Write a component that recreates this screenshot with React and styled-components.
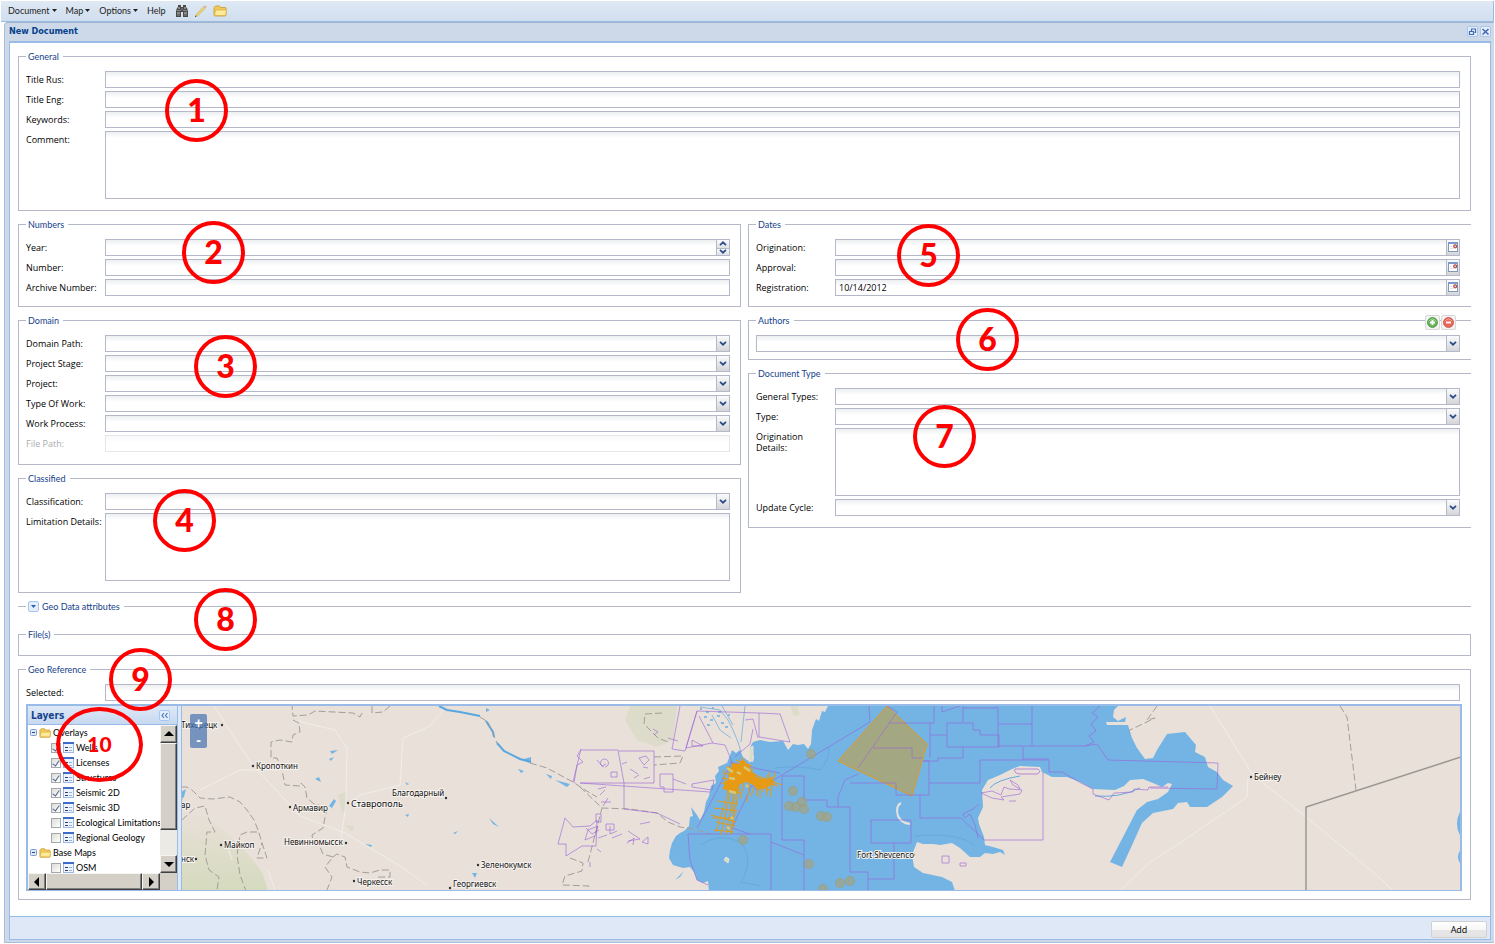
import React from "react";
import styled, { createGlobalStyle, css } from "styled-components";

const GlobalStyle = createGlobalStyle`
  *, *::before, *::after { box-sizing: border-box; }
  body {
    margin: 0;
    background: #fff;
    color: #000;
    font: 9px/13px "Open Sans", "Noto Sans", sans-serif;
  }
  button, input, select, textarea { font: inherit; color: inherit; margin: 0; }
`;

/* ---------- shell ---------- */

const Page = styled.div`
  display: flex;
  flex-direction: column;
  min-height: 100vh;
  padding: 1px;
`;

const Toolbar = styled.nav`
  display: flex;
  align-items: center;
  height: 21px;
  padding: 0 0 1px 7px;
  background: linear-gradient(#dfe9f4, #d0deef);
  border-bottom: 1px solid #99bbe8;
  border-right: 1px solid #99bbe8;
`;

const MenuButton = styled.button`
  display: flex;
  align-items: center;
  gap: 2px;
  padding: 0;
  margin-right: 9px;
  border: 0;
  background: none;
  color: #222;
  font-family: Lato, sans-serif;
  svg { display: block; }
`;

const IconBar = styled.div`
  display: flex;
  gap: 5px;
`;

const IconButton = styled.button`
  width: 14px;
  height: 14px;
  padding: 0;
  border: 0;
  background: none;
  svg { display: block; }
`;

const Window = styled.main`
  flex: 1;
  display: flex;
  flex-direction: column;
  margin-left: 3px;
  padding: 0 3px 2px 4px;
  background: #cdd9e8;
  border: 1px solid #a9bfd8;
  border-top: 1px solid #a2b5cc;
  border-right: 0;
  border-radius: 4px 0 0 0;
`;

const WindowHeader = styled.header`
  display: flex;
  align-items: center;
  justify-content: space-between;
  height: 18px;
  padding-bottom: 1px;
`;

const WindowTitle = styled.h1`
  margin: 0;
  font: bold 9px/13px "DejaVu Sans Condensed", "DejaVu Sans", sans-serif;
  color: #04408c;
`;

const Tools = styled.div`
  display: flex;
  gap: 2px;
`;

const ToolButton = styled.button`
  display: grid;
  place-items: center;
  width: 11px;
  height: 11px;
  padding: 0;
  border: 1px solid #a9c6ef;
  border-radius: 2px;
  background: #e4eefb;
  svg { display: block; }
`;

const Body = styled.form`
  flex: 1;
  display: flex;
  flex-direction: column;
  background: #fff;
  border: 1px solid #99bbe8;
  border-width: 2px 1px 1px 1px;
`;

const Content = styled.div`
  flex: 1;
  display: flex;
  flex-direction: column;
  gap: 7px;
  padding: 7px 19px 16px 8px;
`;

const Columns = styled.div`
  display: grid;
  grid-template-columns: 1fr 1fr;
  gap: 7px;
  align-items: start;
`;

const Column = styled.div`
  display: flex;
  flex-direction: column;
  gap: 7px;
`;

const Footer = styled.footer`
  display: flex;
  justify-content: flex-end;
  padding: 4px 3px 1px;
  background: #dfe8f6;
  border-top: 1px solid #99bbe8;
`;

const AddButton = styled.button`
  width: 56px;
  height: 17px;
  padding: 0;
  border: 1px solid #d1d1d1;
  border-radius: 2px;
  background: linear-gradient(#fff, #f7f7f7 50%, #e6e6e6 51%, #e4e4e4);
`;

/* ---------- form parts ---------- */

const Section = styled.div`
  position: relative;
`;

const FieldsetBox = styled.fieldset`
  min-width: 0;
  margin: 0;
  padding: ${(p) => (p.$bare ? "0" : "8px")} 10px ${(p) => p.$bottom}px 7px;
  min-height: ${(p) => p.$minHeight || 0}px;
  border: 1px solid #b5b8c8;
  ${(p) => p.$openEnd && css`border-right: 0; padding-right: 11px;`}
  ${(p) => p.$collapsed && css`border-width: 1px 0 0; padding-left: 8px;`}
`;

const Legend = styled.legend`
  display: flex;
  align-items: center;
  gap: 3px;
  height: 13px;
  padding: 0 4px 0 2px;
  font-family: Lato, sans-serif;
  line-height: 13px;
  color: #15428b;
`;

const Toggle = styled.button`
  display: grid;
  place-items: center;
  width: 11px;
  height: 11px;
  padding: 0;
  border: 1px solid #a9c6ef;
  border-radius: 2px;
  background: #e4eefb;
  color: #15428b;
`;

const Fields = styled.div`
  display: flex;
  flex-direction: column;
  gap: 3px;
`;

const Row = styled.div`
  display: grid;
  grid-template-columns: ${(p) => (p.$noLabel ? "1fr" : "79px 1fr")};
  align-items: start;
  opacity: ${(p) => (p.$disabled ? 0.35 : 1)};
`;

const Label = styled.label`
  padding: ${(p) => (p.$wrap ? "3px 20px 0 0" : "0")};
  line-height: ${(p) => (p.$wrap ? 11 : 17)}px;
  white-space: ${(p) => (p.$wrap ? "normal" : "nowrap")};
`;

const fieldFace = css`
  border: 1px solid #b5b8c8;
  border-radius: 0;
  background: linear-gradient(#eceff0, #fff 6px);
  outline: none;
`;

const TextInput = styled.input`
  ${fieldFace}
  display: block;
  width: 100%;
  height: 17px;
  padding: 0 3px;
`;

const TextArea = styled.textarea`
  ${fieldFace}
  display: block;
  width: 100%;
  height: 68px;
  padding: 2px 3px;
  resize: none;
`;

const Combo = styled.div`
  ${fieldFace}
  position: relative;
  display: flex;
  height: 17px;
  select, input {
    flex: 1;
    min-width: 0;
    padding: 0 3px;
    border: 0;
    border-radius: 0;
    background: none;
    outline: none;
    appearance: none;
  }
  input::-webkit-inner-spin-button { display: none; }
`;

const Trigger = styled.span`
  display: grid;
  place-items: center;
  width: 13px;
  border-left: 1px solid #b5b8c8;
  background: linear-gradient(#fafbfc, #d3d5d8);
  pointer-events: none;
  svg { display: block; }
`;

const TriggerButton = styled.button`
  display: grid;
  place-items: center;
  width: 13px;
  padding: 0;
  border: 0;
  border-left: 1px solid #b5b8c8;
  background: linear-gradient(#fafbfc, #d3d5d8);
  svg { display: block; }
`;

const SpinButtons = styled.span`
  display: grid;
  grid-template-rows: 1fr 1fr;
  width: 13px;
  border-left: 1px solid #b5b8c8;
  button {
    display: grid;
    place-items: center;
    min-height: 0;
    padding: 0;
    border: 0;
    background: linear-gradient(#fafbfc, #dfe0e4);
  }
  button + button { border-top: 1px solid #b5b8c8; }
  svg { display: block; }
`;

const FieldActions = styled.div`
  position: absolute;
  top: 1px;
  right: 15px;
  display: flex;
  gap: 1px;
`;

const RoundAction = styled.button`
  display: grid;
  place-items: center;
  width: 15px;
  height: 15px;
  padding: 0;
  border: 1px solid #d9d9d9;
  border-radius: 2px;
  background: #f3f3f3;
  svg { display: block; }
`;

const Callout = styled.span`
  position: absolute;
  z-index: 2;
  left: ${(p) => p.$x}px;
  top: ${(p) => p.$y}px;
  display: grid;
  place-items: center;
  width: ${(p) => (p.$wide ? 87 : 63)}px;
  height: ${(p) => (p.$wide ? 75 : 63)}px;
  padding-bottom: 2px;
  border: 4px solid #f00;
  border-radius: 50%;
  color: #f00;
  font: 900 ${(p) => (p.$wide ? 21 : 32)}px/34px Lato, sans-serif;
  pointer-events: none;
`;

/* ---------- map panel ---------- */

const MapPanel = styled.div`
  display: grid;
  grid-template-columns: 153px 1fr;
  height: 187px;
  margin-right: -2px;
  border: 2px solid #99bbe8;
  border-bottom-width: 1px;
  background: #dfe8f6;
`;

const LayersPanel = styled.section`
  display: flex;
  flex-direction: column;
  min-height: 0;
  margin-right: 3px;
  border-right: 1px solid #99bbe8;
`;

const LayersHeader = styled.header`
  display: flex;
  align-items: center;
  justify-content: space-between;
  height: 19px;
  padding: 0 7px 0 3px;
  background: linear-gradient(#dfe9f6, #c6d8f0);
  border-bottom: 1px solid #99bbe8;
`;

const LayersTitle = styled.h2`
  margin: 0;
  font: bold 10px/13px "DejaVu Sans Condensed", "DejaVu Sans", sans-serif;
  color: #15428b;
`;

const TreeViewport = styled.div`
  flex: 1;
  min-height: 0;
  display: grid;
  grid-template-columns: 1fr 17px;
  grid-template-rows: 1fr 17px;
  background: #d4d0c8;
`;

const Tree = styled.ul`
  margin: 0;
  padding: 0 0 0 2px;
  overflow: hidden;
  background: #fff;
  list-style: none;
  font-family: Lato, sans-serif;
`;

const TreeRow = styled.li`
  display: flex;
  align-items: center;
  gap: 2px;
  height: 15px;
  padding-left: ${(p) => (p.$leaf ? 21 : 0)}px;
  white-space: nowrap;
  label { display: flex; align-items: center; gap: 2px; }
  svg { display: block; flex: none; }
`;

const Check = styled.input`
  appearance: none;
  display: grid;
  place-items: center;
  flex: none;
  width: 10px;
  height: 10px;
  border: 1px solid #a4a8ac;
  background: linear-gradient(135deg, #dcdcd7, #fff);
  &:checked::after {
    content: "";
    width: 4px;
    height: 7px;
    margin-bottom: 2px;
    border: solid #4b5f97;
    border-width: 0 1px 1px 0;
    transform: rotate(35deg);
  }
`;

const ScrollTrack = styled.div`
  display: flex;
  flex-direction: ${(p) => (p.$vertical ? "column" : "row")};
  background: #eceae5;
`;

const bevel = css`
  border: 1px solid;
  border-color: #f6f5f2 #404040 #404040 #f6f5f2;
  background: #d4d0c8;
  box-shadow: inset -1px -1px #808080;
`;

const ScrollButton = styled.button`
  ${bevel}
  display: grid;
  place-items: center;
  flex: none;
  width: ${(p) => (p.$vertical ? "auto" : "18px")};
  height: ${(p) => (p.$vertical ? "18px" : "auto")};
  padding: 0;
  svg { display: block; }
`;

const Thumb = styled.div`
  ${bevel}
  flex: ${(p) => p.$grow};
`;

const Gap = styled.div`
  flex: ${(p) => p.$grow};
`;

const MapView = styled.div`
  position: relative;
  min-width: 0;
  border-left: 1px solid #99bbe8;
  background: #e8e0d9;
  overflow: hidden;
  > svg { display: block; width: 100%; height: 100%; }
`;

const ZoomControl = styled.div`
  position: absolute;
  left: 8px;
  top: 8px;
  display: flex;
  flex-direction: column;
  width: 17px;
  height: 34px;
  border-radius: 2px;
  background: rgba(74, 117, 178, 0.72);
  overflow: hidden;
  button {
    flex: 1;
    padding: 0;
    border: 0;
    background: none;
    color: #fff;
    font: bold 14px/16px "Liberation Sans", sans-serif;
  }
`;

/* ---------- icons ---------- */

const Caret = ({ color = "#222" }) => (
  <svg width="5" height="3" viewBox="0 0 5 3" aria-hidden="true"><path d="M0 0h5L2.500 3z" fill={color} /></svg>
);

const Chevron = ({ up }) => (
  <svg width="8" height="5" viewBox="0 0 8 5" aria-hidden="true">
    <path d={up ? "M1 4.200 4 1.300 7 4.200" : "M1 .8 4 3.700 7 .8"} fill="none" stroke="#2b4a86" strokeWidth="1.700" />
  </svg>
);

const CalendarIcon = () => (
  <svg width="10" height="11" viewBox="0 0 10 11" aria-hidden="true">
    <rect x=".5" y="1" width="9" height="8.500" fill="#fff" stroke="#8296ba" />
    <rect x="0" y="0" width="10" height="2" fill="#7c9acb" />
    <path d="M2 4.500h2M2 6.500h4" stroke="#dde2ea" />
    <circle cx="7.200" cy="4.300" r="1.500" fill="#f3d4d4" stroke="#b8474b" strokeWidth="1.200" />
  </svg>
);

const Binoculars = () => (
  <svg width="14" height="14" viewBox="0 0 14 14" aria-hidden="true">
    <path d="M3 1h3v2h2V1h3v2l1 1 1 3v6H8V8H6v5H1V7l1-3 1-1z" fill="#4a4a4a" />
    <path d="M3 4h2M9 4h2M3 6v1M5 6v1M9 6v1M11 6v1M2 9h3M9 9h3" stroke="#c9c9c9" />
    <path d="M2 11h3M9 11h3M6 5h2" stroke="#8b8b8b" />
  </svg>
);

const Pencil = () => (
  <svg width="14" height="14" viewBox="0 0 14 14" aria-hidden="true">
    <path d="M1.500 12.500l.8-2.200 7.700-7.800 1.500 1.500-7.800 7.800z" fill="#f1dc73" stroke="#b99c45" strokeWidth=".6" />
    <path d="M10 2.500l1-1q1.200 0 1.500 1.500l-1 1z" fill="#e3a3a0" />
    <path d="M1 13l.5-1.500 1 1z" fill="#333" />
  </svg>
);

const Folder = ({ size = 14 }) => (
  <svg width={size} height={size} viewBox="0 0 14 14" aria-hidden="true">
    <path d="M1 3.500V11q0 1 1 1h10q1 0 1-1V4.500q0-1-1-1H7.500L6.500 2H2.500z" fill="#f0cb5c" stroke="#c79a2e" strokeWidth=".8" />
    <path d="M1.500 11.500 2.500 6h11l-1 5.500z" fill="#fdeb9a" stroke="#d6ad42" strokeWidth=".7" />
  </svg>
);

const LayerIcon = () => (
  <svg width="11" height="11" viewBox="0 0 11 11" aria-hidden="true">
    <rect x=".5" y=".5" width="10" height="10" fill="#eef4fd" stroke="#9cb6e6" />
    <path d="M0 1h11" stroke="#3d6cc8" strokeWidth="2" />
    <path d="M2 5.500h3M2 8.500h3" stroke="#2f3f63" />
    <path d="M6 5.500h3M6 8.500h3" stroke="#9bb1d8" />
  </svg>
);

const Expander = () => (
  <svg width="7" height="7" viewBox="0 0 7 7" aria-hidden="true">
    <rect x=".5" y=".5" width="6" height="6" rx="1" fill="#dbe8fb" stroke="#7f9bcb" />
    <path d="M2 3.500h3" stroke="#2b4a86" />
  </svg>
);

const Arrow = ({ d }) => (
  <svg width="10" height="10" viewBox="0 0 10 10" aria-hidden="true"><path d={d} fill="#000" /></svg>
);

const RestoreIcon = () => (
  <svg width="9" height="9" viewBox="0 0 9 9" fill="none" stroke="#4468b0" aria-hidden="true">
    <path d="M3 2h5M3.500 2v2M7.500 2v3.500H6.500M1 4.500h5M1.500 4.500v3h4v-3" strokeWidth="1.200" />
  </svg>
);

const CloseIcon = () => (
  <svg width="9" height="9" viewBox="0 0 9 9" aria-hidden="true">
    <path d="M1.500 2 7.500 7.500M7.500 2 1.500 7.500" stroke="#4468b0" strokeWidth="1.600" />
  </svg>
);

const CollapseIcon = () => (
  <svg width="9" height="9" viewBox="0 0 9 9" aria-hidden="true">
    <path d="M4 2 2 4.500 4 7M7.500 2l-2 2.500 2 2.500" fill="none" stroke="#4a78bf" strokeWidth="1.200" />
  </svg>
);

const Orb = ({ plus }) => (
  <svg width="11" height="11" viewBox="0 0 11 11" aria-hidden="true">
    <circle cx="5.500" cy="5.500" r="5" fill={plus ? "#69b35a" : "#e8665a"} stroke={plus ? "#4b9440" : "#cf4a40"} strokeWidth=".8" />
    <path d="M2 4q3.500-4 7 0" fill="none" stroke="#fff" strokeOpacity=".4" />
    <path d={plus ? "M3 5.500h5M5.500 3v5" : "M3 5.500h5"} stroke="#fff" strokeWidth="1.800" />
  </svg>
);

/* ---------- map drawing ---------- */

const SEA =
  "M828 706 825 712 822 711 819 721 816 719 812 730 811 744 808 749 804 744 798 745 793 744 788 750 783 741 770 742 760 740 753 742 750 747 754 757 753 762 747 760 743 757 740 750 736 753 732 750 729 758 727 763 718 767 719 771 715 776 716 783 711 786 709 796 706 802 704 812 700 820 697 815 691 807 693 816 690 817 689 826 684 831 680 833 676 836 672 843 670 850 669 858 673 865 683 868 690 867 694 872 697 880 703 883 708 881 709 891" +
  " 955 891 952 882 942 877 923 873 914 867 912 855 917 842 923 844 933 844 940 845 952 843 960 848 970 857 980 857 985 853 993 854 1000 852 1005 855 1003 850 993 847 985 845 984 837 979 824 978 818 983 807 982 790 988 780 1000 775 1012 769 1020 766 1040 767 1042 772 1052 777 1067 777 1080 782 1093 789 1115 790 1124 786 1130 780 1143 779 1153 783 1162 787 1168 783 1172 784 1168 792 1158 799 1147 802 1137 810 1123 837 1110 862 1122 867 1133 843 1142 823 1153 813 1173 809 1178 803 1187 802 1190 807 1207 807 1222 797 1233 786 1223 780 1217 772 1208 767 1205 757 1195 752 1196 745 1185 732 1167 734 1157 750 1153 758 1145 759 1137 748 1132 738 1128 725 1107 725 1106 722 1125 722 1126 717 1118 721 1113 717 1114 710 1118 706Z";

const LICENSES = [
  "M580 750H618L624 783H580M619 751H654V783H624V809L657 813 680 824M580 783 710 792",
  "M680 706 672 749 685 751M697 711 759 713 759 737 790 742 780 714 759 713M697 711 685 751M699 716 713 743",
  "M697 711 686 748 712 743 725 745 732 762M745 720 753 719 758 738",
  "M692 784 714 780 712 790 692 787ZM660 774H673V792H664V787H660ZM673 779 686 784",
  "M732 762 697 828M730 762 759 769 780 773M688 834H771V891M688 834 690 860 697 880 708 885",
  "M732 828 750 834M771 842 804 855M782 776H804V800H827V807H850V872H868V891M782 776V840H804V891",
  "M732 828 752 785 757 790 870 722 869 706M735 757 750 744 753 729",
  "M871 820H911V843H871ZM894 843V879H868M838 807V797L845 780 858 774M887 706 897 712 858 768M889 723H934V706M873 748H912V758H922M850 783H896V795H929V761H923",
  "M930 723V758M930 735H947M947 723H973V730H980V735H999V747H947V723M963 706V722M963 708H997V706M998 708V747M999 724H1032V706M1032 724V746H999M1032 746H1085",
  "M942 706V712L960 706M920 795V818H961L984 840H1043V772M929 783H980V760H1049V772M963 747V758H938V761H923",
  "M1085 746 1097 744 1108 760 1218 763 1217 789 1150 788M1049 772 1062 772 1081 783 1093 789 1093 794 1109 800 1114 793 1133 792 1134 789 1148 790 1149 787 1168 787M1023 747V759H1049",
  "M1100 706 1092 713 1098 717 1091 724 1096 731 1089 736 1094 742 1085 746",
  "M981 793 992 791 1001 795 1004 787 1009 789 1022 790 1020 794 1001 797 1004 800 992 798ZM1010 780 1018 785 1020 789 1013 785ZM1009 801H1016",
  "M979 804 973 809 963 814 965 818 970 814 975 825 978 838M942 856H949V863H942ZM960 863H966V866H960Z",
  "M573 782 581 749M580 751 577 756 583 762 577 765 574 783M565 818 573 827 590 826 597 820 596 846 582 846 566 856V844H558Z",
  "M597 760 602 766 606 764M605 767a4 4 0 1 0-1 0M611 772H617V777H611ZM639 758 646 756 649 760 644 765ZM622 764 627 762M630 769 638 774M643 767 648 768M634 778 639 775M644 779 650 777",
  "M598 789 606 787M600 795 605 790M601 802H611M603 806 608 798M596 814H601V822H596ZM606 824H614V830H606ZM640 824 650 822",
  "M588 830 598 826 595 836 585 840ZM598 838 607 835M612 838 622 834M627 843 634 838 633 845M642 842 648 837 648 844ZM590 862V867M597 849 601 852M586 828 592 834 599 830M610 826V834L617 831M628 831 640 839 628 841",
  "M653 729 658 732 654 735M668 738 678 741M692 740 703 746 692 746Z",
];

const BORDERS = [
  "M390 706 383 712 372 713V706M362 713 360 717 353 713 315 711 308 715 293 716 292 706",
  "M293 720 299 723 300 732 293 735 292 742 280 740 271 742V758H277L282 770 285 785 300 786 301 783 305 787 307 798 314 804 327 807 323 828 312 835 313 840 320 847 323 854 333 857 325 867 332 877 327 890",
  "M182 787 187 787 192 790 200 798 212 799 230 797 240 802 247 810 254 820 258 830 262 843 267 858H257L262 843",
  "M333 857 337 854 345 857 347 867 360 872 370 873 380 870 390 870V877H378",
  "M480 717 488 722 497 743M530 763 547 768 573 782 585 790 597 797M580 787 602 808 630 809 657 813 668 822 680 827 695 829 710 834",
  "M182 820 195 808 205 806 209 820 215 832 207 832 205 855 209 870 219 877 217 890M257 832H247L240 835 237 855 240 875 246 891",
  "M662 713 645 714 644 724 658 738 668 742M654 757 683 756 680 763 654 765M1340 706 1347 717 1356 790",
  "M570 858 583 863 582 871 565 876 562 885 589 886V891M588 862 602 808M1157 706 1147 720 1155 718 1128 731",
];

const ROADS = [
  "M214 706 252 764 300 816 345 833 400 866 427 885M293 720 335 730 347 748 346 805 341 838M346 805 360 795 400 785 403 738 430 726 443 710",
  "M1210 706 1253 775 1305 816 1380 878 1393 891M1248 778 1247 797 1180 843 1150 862 1120 891",
  "M200 790 240 770 280 770M225 840 232 860M268 870 275 890",
];

const SEISMIC = [
  "M721 835 732 785M726 834 736 782M716 832 730 787M731 834 740 782M736 782 731 834M711 815 736 822M714 808 738 811M716 822 735 826M714 830 734 832M717 801 738 804M712 818 734 818",
  "M723 788 737 770M727 793 745 765M721 783 740 786M722 778 740 780M723 773 742 777M726 767 746 772M727 791 741 793M722 788 741 790M728 766 730 794M733 764 734 795M738 762 737 794M724 770 725 790",
  "M732 764 748 770M736 760 752 766M742 757V778M745 761V780M749 764V778M752 767V782M740 775 760 780M745 776 778 786M750 779 775 783M752 774 782 785M750 783 770 790M757 779V796M760 777V798M763 778V792M767 775V792M770 772 766 796M775 773 770 797",
  "M745 779 740 799M750 781 747 802M755 785 751 796M735 770 770 782M733 766 757 775M741 771 764 789",
];

const WELLS = [
  [811, 754], [793, 791], [789, 806], [796, 807], [802, 802], [804, 809], [821, 816], [827, 817],
  [743, 840], [809, 864], [823, 889], [840, 883], [850, 881],
];

const CITIES = [
  { x: 181, y: 728, name: "Тихорецк", dot: [222, 725] },
  { x: 256, y: 769, name: "Кропоткин", dot: [253, 766] },
  { x: 293, y: 811, name: "Армавир", dot: [290, 807] },
  { x: 351, y: 807, name: "Ставрополь", dot: [348, 803], big: true },
  { x: 392, y: 796, name: "Благодарный", dot: [446, 798] },
  { x: 224, y: 848, name: "Майкоп", dot: [221, 845] },
  { x: 284, y: 845, name: "Невинномысск", dot: [346, 843] },
  { x: 357, y: 885, name: "Черкесск", dot: [354, 881] },
  { x: 481, y: 868, name: "Зеленокумск", dot: [478, 865] },
  { x: 453, y: 887, name: "Георгиевск", dot: [450, 888] },
  { x: 181, y: 808, name: "ар", dot: [181, 799] },
  { x: 181, y: 862, name: "нск", dot: [196, 859] },
  { x: 1254, y: 780, name: "Бейнеу", dot: [1251, 777] },
  { x: 857, y: 858, name: "Fort Shevcenco", dot: [914, 855] },
];

const CityText = styled.text`
  font: ${(p) => (p.$big ? 9 : 8)}px "Noto Sans", sans-serif;
  fill: #111;
  stroke: #f6f2ee;
  stroke-width: 2px;
  paint-order: stroke;
`;

const MapDrawing = () => (
  <svg viewBox="181 706 1280 184" preserveAspectRatio="xMidYMid slice" role="img" aria-label="Map of the northern Caspian Sea">
    <defs>
      <linearGradient id="hills" x1="0" y1="0" x2="0" y2="1">
        <stop offset="0" stopColor="#e8e0d9" />
        <stop offset="1" stopColor="#d5dabd" />
      </linearGradient>
    </defs>
    <path d="M181 812 200 812 225 832 245 850 262 872 268 891H181Z" fill="url(#hills)" />
    <path d="M630 706 625 720 637 740 657 747 673 740 677 706ZM790 706 794 716 800 715 797 706Z" fill="#dddccb" />
    <path d="M338 795 346 792 347 810 342 813ZM345 825 354 826 352 832Z" fill="#dddccb" />
    <g fill="none" stroke="#f3ede8" strokeWidth="1">{ROADS.map((d) => <path key={d} d={d} />)}</g>
    <path d={SEA} fill="#73b4e5" />
    <g fill="none" stroke="#68a8dc" strokeWidth="1">
      <path d="M700 845Q720 832 740 842 755 858 741 882L760 886M775 768Q800 765 820 770 832 755 828 747M990 788Q996 780 1020 776M1095 796Q1120 798 1140 788M915 836Q960 832 975 846" />
      <path d="M700 707 720 710 728 720 733 730 738 742 741 752M712 715 720 730 731 738M745 706 741 742M722 706 733 725" strokeWidth=".7" />
    </g>
    <path d="M700 709h2M706 712h3M712 708h2M704 717h3M710 720h3M717 716h3M721 723h3M707 725h3M725 727h3M718 712h3M728 715h2" stroke="#67aee2" strokeWidth="1.500" />
    <g fill="#73b4e5">
      <path d="M838 706 841 711 845 710 843 706ZM1461 810Q1453 824 1461 837ZM1461 849Q1455 857 1461 865ZM181 792 186 789 184 797 181 799ZM334 799 336 801 332 808 329 806ZM315 779 319 777 321 782ZM329 759 334 757 331 761ZM675 880 684 871 680 877ZM524 759 531 757V763L525 761ZM546 774 552 776 551 779ZM555 780 570 784 567 787ZM365 844 372 845 371 847ZM486 708 490 710 486 712ZM489 818 499 827 493 824ZM453 833 458 831 455 834ZM518 769 524 771 521 773ZM472 873 477 873 475 878ZM405 782 409 784 407 785ZM405 815 409 814 408 817ZM330 751 338 750 332 754Z" />
    </g>
    <path d="M439 706 447 710 460 712 480 716M486 721 493 732 494 737M497 743 504 751 520 759 531 762" fill="none" stroke="#58a7df" strokeWidth="2" />
    <path d="M749 748 753 746 753 760 749 762ZM726 857 729 859 728 863 724 860Z" fill="#d8ddc8" stroke="#e8e0d9" />
    <path d="M901 803Q895 806 898 816 901 823 910 824" fill="none" stroke="#e8e4dd" strokeWidth="2" />
    <g fill="none" stroke="#a49e99" strokeWidth="1" strokeDasharray="7 3">{BORDERS.map((d) => <path key={d} d={d} />)}</g>
    <path d="M1306 891V807L1461 757" fill="none" stroke="#9a9690" strokeWidth="1.500" />
    <path d="M887 706 927 744 912 796 838 761Z" fill="#a4a882" stroke="#e09a20" />
    <g fill="none" stroke="#9a62d8" strokeOpacity=".6" strokeWidth="1">{LICENSES.map((d) => <path key={d} d={d} />)}</g>
    <path d="M1015 769H1038Q1042 772 1037 774H1020Q1013 773 1015 769Z" fill="#e8e0d9" stroke="#b48ad6" />
    <path d="M732 763 739 764 743 759 749 766 752 772 758 779 768 779 773 776 771 786 764 788 759 790 752 784 746 782 738 785 737 792 725 790 724 783 729 778Z" fill="#e79a14" />
    <g fill="none" stroke="#e79a14" strokeWidth="1">{SEISMIC.map((d) => <path key={d} d={d} />)}</g>
    <path d="M727 768 733 772M737 772 741 774M744 767 750 771M729 778 735 779M729 791 736 793M746 785 748 787M731 817 733 819M727 827 730 829" stroke="#d7c878" strokeWidth="2.500" />
    <g fill="#a8a27a" fillOpacity=".65" stroke="#a39a68" strokeOpacity=".6">
      {WELLS.map(([x, y]) => <circle key={`${x}-${y}`} cx={x} cy={y} r="4.500" />)}
    </g>
    {CITIES.map((c) => (
      <g key={c.name}>
        <circle cx={c.dot[0]} cy={c.dot[1]} r="1.200" fill="#333" />
        <CityText x={c.x} y={c.y} $big={c.big}>{c.name}</CityText>
      </g>
    ))}
  </svg>
);

/* ---------- composed fields ---------- */

const idOf = (label) => label.toLowerCase().replace(/[^a-z]+/g, "-");

const Field = ({ label, wrap, disabled, children }) => (
  <Row $disabled={disabled}>
    <Label htmlFor={idOf(label)} $wrap={wrap}>{label}:</Label>
    {children}
  </Row>
);

const TextField = ({ label, disabled }) => (
  <Field label={label} disabled={disabled}><TextInput id={idOf(label)} type="text" disabled={disabled} /></Field>
);

const AreaField = ({ label, wrap }) => (
  <Field label={label} wrap={wrap}><TextArea id={idOf(label)} /></Field>
);

const SelectBox = ({ id, ariaLabel }) => (
  <Combo>
    <select id={id} aria-label={ariaLabel}><option value="" /></select>
    <Trigger><Chevron /></Trigger>
  </Combo>
);

const SelectField = ({ label }) => (
  <Field label={label}><SelectBox id={idOf(label)} /></Field>
);

const DateField = ({ label, value = "" }) => (
  <Field label={label}>
    <Combo>
      <input id={idOf(label)} type="text" defaultValue={value} />
      <TriggerButton type="button" aria-label={`Pick ${label} date`}><CalendarIcon /></TriggerButton>
    </Combo>
  </Field>
);

const Group = ({ title, callout, bottom = 11, children, extra, ...box }) => (
  <Section>
    <FieldsetBox $bottom={bottom} {...box}>
      <Legend>{title}</Legend>
      <Fields>{children}</Fields>
    </FieldsetBox>
    {extra}
    {callout && <Callout $x={callout[1]} $y={callout[2]}>{callout[0]}</Callout>}
  </Section>
);

const LAYERS = [
  ["Wells", true],
  ["Licenses", true],
  ["Structures", true],
  ["Seismic 2D", true],
  ["Seismic 3D", true],
  ["Ecological Limitations", false],
  ["Regional Geology", false],
];

const TreeFolder = ({ name }) => (
  <TreeRow><Expander /><Folder size={12} />{name}</TreeRow>
);

const TreeLayer = ({ name, on }) => (
  <TreeRow $leaf>
    <label><Check type="checkbox" defaultChecked={on} /><LayerIcon />{name}</label>
  </TreeRow>
);

export default function App() {
  return (
    <>
      <GlobalStyle />
      <Page>
        <Toolbar>
          <MenuButton type="button">Document<Caret /></MenuButton>
          <MenuButton type="button">Map<Caret /></MenuButton>
          <MenuButton type="button">Options<Caret /></MenuButton>
          <MenuButton type="button">Help</MenuButton>
          <IconBar>
            <IconButton type="button" aria-label="Search"><Binoculars /></IconButton>
            <IconButton type="button" aria-label="Edit"><Pencil /></IconButton>
            <IconButton type="button" aria-label="Open"><Folder /></IconButton>
          </IconBar>
        </Toolbar>
        <Window>
          <WindowHeader>
            <WindowTitle>New Document</WindowTitle>
            <Tools>
              <ToolButton type="button" aria-label="Restore"><RestoreIcon /></ToolButton>
              <ToolButton type="button" aria-label="Close"><CloseIcon /></ToolButton>
            </Tools>
          </WindowHeader>
          <Body onSubmit={(e) => e.preventDefault()}>
            <Content>
              <Group title="General" callout={[1, 147, 29]}>
                <TextField label="Title Rus" />
                <TextField label="Title Eng" />
                <TextField label="Keywords" />
                <AreaField label="Comment" />
              </Group>
              <Columns>
                <Column>
                  <Group title="Numbers" callout={[2, 164, 3]} bottom={10}>
                    <Field label="Year">
                      <Combo>
                        <input id="year" type="number" />
                        <SpinButtons>
                          <button type="button" aria-label="Next year"><Chevron up /></button>
                          <button type="button" aria-label="Previous year"><Chevron /></button>
                        </SpinButtons>
                      </Combo>
                    </Field>
                    <TextField label="Number" />
                    <TextField label="Archive Number" />
                  </Group>
                  <Group title="Domain" callout={[3, 176, 21]} bottom={12}>
                    <SelectField label="Domain Path" />
                    <SelectField label="Project Stage" />
                    <SelectField label="Project" />
                    <SelectField label="Type Of Work" />
                    <SelectField label="Work Process" />
                    <TextField label="File Path" disabled />
                  </Group>
                  <Group title="Classified" callout={[4, 135, 17]}>
                    <SelectField label="Classification" />
                    <AreaField label="Limitation Details" />
                  </Group>
                </Column>
                <Column>
                  <Group title="Dates" callout={[5, 149, 6]} bottom={10} $openEnd>
                    <DateField label="Origination" />
                    <DateField label="Approval" />
                    <DateField label="Registration" value="10/14/2012" />
                  </Group>
                  <Group
                    title="Authors"
                    callout={[6, 208, -6]}
                    bottom={7}
                    $openEnd
                    extra={
                      <FieldActions>
                        <RoundAction type="button" aria-label="Add author"><Orb plus /></RoundAction>
                        <RoundAction type="button" aria-label="Remove author"><Orb /></RoundAction>
                      </FieldActions>
                    }
                  >
                    <Row $noLabel><SelectBox id="authors" ariaLabel="Authors" /></Row>
                  </Group>
                  <Group title="Document Type" callout={[7, 165, 38]} $openEnd>
                    <SelectField label="General Types" />
                    <SelectField label="Type" />
                    <AreaField label="Origination Details" wrap />
                    <SelectField label="Update Cycle" />
                  </Group>
                </Column>
              </Columns>
              <Group
                title={<><Toggle type="button" aria-label="Expand"><Caret color="#2b5fb0" /></Toggle>Geo Data attributes</>}
                callout={[8, 176, -12]}
                bottom={0}
                $bare
                $collapsed
                $minHeight={21}
              />
              <Group title="File(s)" bottom={14} $bare />
              <Section>
                <FieldsetBox $bottom={8}>
                  <Legend>Geo Reference</Legend>
                  <Fields>
                    <TextField label="Selected" />
                    <MapPanel>
                      <LayersPanel>
                        <LayersHeader>
                          <LayersTitle>Layers</LayersTitle>
                          <ToolButton type="button" aria-label="Collapse layers"><CollapseIcon /></ToolButton>
                        </LayersHeader>
                        <TreeViewport>
                          <Tree>
                            <TreeFolder name="Overlays" />
                            {LAYERS.map(([name, on]) => <TreeLayer key={name} name={name} on={on} />)}
                            <TreeFolder name="Base Maps" />
                            <TreeLayer name="OSM" on={false} />
                          </Tree>
                          <ScrollTrack $vertical>
                            <ScrollButton type="button" $vertical aria-label="Scroll up"><Arrow d="M0 7h10L5 2z" /></ScrollButton>
                            <Thumb $grow={77} />
                            <Gap $grow={23} />
                            <ScrollButton type="button" $vertical aria-label="Scroll down"><Arrow d="M0 3h10L5 8z" /></ScrollButton>
                          </ScrollTrack>
                          <ScrollTrack>
                            <ScrollButton type="button" aria-label="Scroll left"><Arrow d="M7 0v10L2 5z" /></ScrollButton>
                            <Thumb $grow={1} />
                            <ScrollButton type="button" aria-label="Scroll right"><Arrow d="M3 0v10l5-5z" /></ScrollButton>
                          </ScrollTrack>
                        </TreeViewport>
                      </LayersPanel>
                      <MapView>
                        <MapDrawing />
                        <ZoomControl>
                          <button type="button" aria-label="Zoom in">+</button>
                          <button type="button" aria-label="Zoom out">-</button>
                        </ZoomControl>
                      </MapView>
                    </MapPanel>
                  </Fields>
                </FieldsetBox>
                <Callout $x={91} $y={-15}>9</Callout>
                <Callout $x={38} $y={44} $wide>10</Callout>
              </Section>
            </Content>
            <Footer><AddButton type="submit">Add</AddButton></Footer>
          </Body>
        </Window>
      </Page>
    </>
  );
}
